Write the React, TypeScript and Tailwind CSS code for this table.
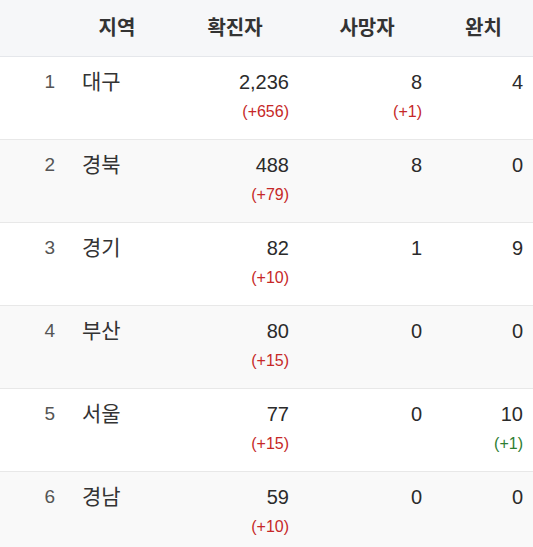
import React from 'react';

type Row = {
  rank: number;
  region: string;
  confirmed: string;
  confirmedDelta?: string;
  deaths: string;
  deathsDelta?: string;
  recovered: string;
  recoveredDelta?: string;
};

const rows: Row[] = [
  { rank: 1, region: '대구', confirmed: '2,236', confirmedDelta: '(+656)', deaths: '8', deathsDelta: '(+1)', recovered: '4' },
  { rank: 2, region: '경북', confirmed: '488', confirmedDelta: '(+79)', deaths: '8', recovered: '0' },
  { rank: 3, region: '경기', confirmed: '82', confirmedDelta: '(+10)', deaths: '1', recovered: '9' },
  { rank: 4, region: '부산', confirmed: '80', confirmedDelta: '(+15)', deaths: '0', recovered: '0' },
  { rank: 5, region: '서울', confirmed: '77', confirmedDelta: '(+15)', deaths: '0', recovered: '10', recoveredDelta: '(+1)' },
  { rank: 6, region: '경남', confirmed: '59', confirmedDelta: '(+10)', deaths: '0', recovered: '0' },
];

function Value({ value, delta, green }: { value: string; delta?: string; green?: boolean }) {
  return (
    <div className="flex flex-col items-end pt-[10px]">
      <span className="text-[20px] leading-[30px] text-[#2b2b2b]">{value}</span>
      {delta && (
        <span className={`text-[16px] leading-[24px] mt-[3px] ${green ? 'text-[#2e7d32]' : 'text-[#c62828]'}`}>
          {delta}
        </span>
      )}
    </div>
  );
}

export default function App() {
  return (
    <div className="w-[533px] h-[547px] overflow-hidden bg-white [font-family:Arial,Liberation_Sans,Noto_Sans_CJK_KR,sans-serif]">
      {/* Header */}
      <div className="grid grid-cols-[70px_100px_130px_133px_100px] h-[57px] bg-[#f6f7f9] border-b border-[#e5e7eb] items-center text-[20px] font-bold text-[#333]">
        <div />
        <div className="pl-[12px] pr-[18px] text-center">지역</div>
        <div className="px-[11px] text-center">확진자</div>
        <div className="pl-[12px] pr-[11px] text-center">사망자</div>
        <div className="pl-[11px] pr-[10px] text-center">완치</div>
      </div>

      {/* Rows */}
      {rows.map((r, i) => (
        <div
          key={r.rank}
          className={`grid grid-cols-[70px_100px_130px_133px_100px] h-[83px] border-b border-[#e8e8e8] ${i % 2 === 1 ? 'bg-[#f9f9f9]' : 'bg-white'}`}
        >
          <div className="pr-[15px] pt-[10px] text-right text-[19px] leading-[30px] text-[#555]">{r.rank}</div>
          <div className="pl-[12px] pt-[10px] text-[21px] leading-[30px] text-[#333]">{r.region}</div>
          <div className="pr-[11px]">
            <Value value={r.confirmed} delta={r.confirmedDelta} />
          </div>
          <div className="pr-[11px]">
            <Value value={r.deaths} delta={r.deathsDelta} />
          </div>
          <div className="pr-[10px]">
            <Value value={r.recovered} delta={r.recoveredDelta} green />
          </div>
        </div>
      ))}
    </div>
  );
}
